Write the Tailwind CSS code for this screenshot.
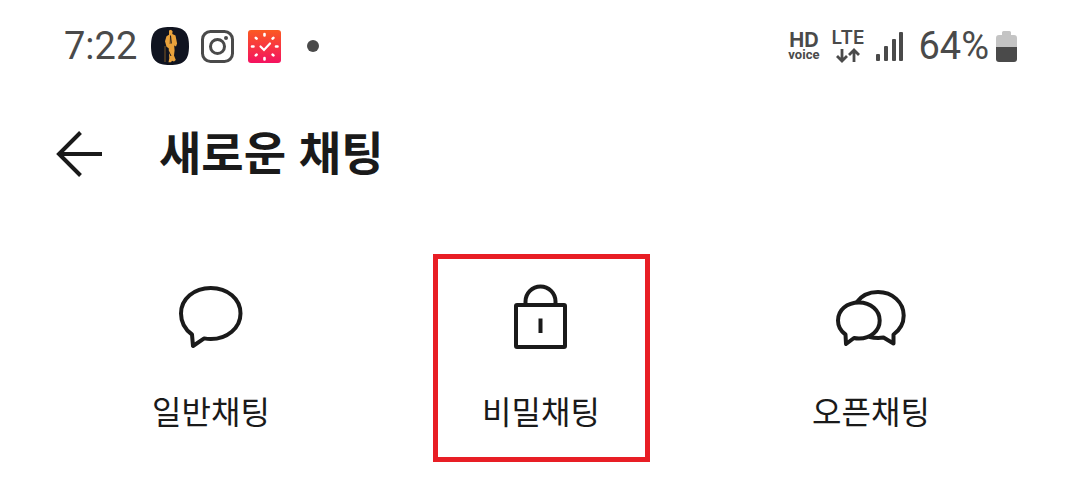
<!DOCTYPE html>
<html lang="ko">
<head>
    <meta charset="UTF-8">
    <meta name="viewport" content="width=device-width, initial-scale=1.0">
    <script src="https://cdn.jsdelivr.net/npm/@tailwindcss/browser@4"></script>
    <title>새로운 채팅</title>
</head>

<body class="bg-white text-[#1a1a1a] font-['Noto_Sans_CJK_KR',sans-serif]">
    <!-- Status bar -->
    <div class="flex items-center justify-between pt-6 pl-16 pr-[63px] text-[#4a4a4a] font-[Roboto,sans-serif]">
        <div class="flex items-center h-11">
            <span class="text-[38px] leading-[44px]">7:22</span>
            <svg class="ml-3.5 size-[38px]" viewBox="0 0 38 38" aria-hidden="true">
                <path d="M19 0C33 0 38 5 38 19S33 38 19 38 0 33 0 19 5 0 19 0Z" fill="#101420" />
                <path d="M18 3.500l2-.8 1.600 1.500-.3 2.800 3.200 1.500 1.600 8-1.100 3-1.800-1 .4 5-.6 5 1.800 4.500-1.800 1.500-2-.8-1 1.500h-2.500l.8-4-.6-10-2.200-1.500-1.500-5.500 1.500-5 2.500-1.500z" fill="#e9a23b" />
                <path d="M14 19v16M19.500 9l-.5 8" stroke="#7a5626" stroke-width="1" fill="none" />
                <path d="M19.500 8.500l.8 8M17.500 24l2.500 5" stroke="#101420" stroke-width="1" fill="none" />
            </svg>
            <svg class="ml-3 size-[33px]" viewBox="0 0 33 33" fill="none" stroke="#4a4a4a" aria-hidden="true">
                <rect x="1.500" y="1.500" width="30" height="30" rx="8" stroke-width="3" />
                <circle cx="16.500" cy="16.500" r="7" stroke-width="3" />
                <circle cx="25" cy="8" r="2" fill="#4a4a4a" stroke="none" />
            </svg>
            <svg class="ml-3.5 size-[33px]" viewBox="0 0 33 33" fill="none" stroke="#fff" stroke-linecap="round" aria-hidden="true">
                <defs>
                    <linearGradient id="clock-bg" x1="0" y1="0" x2="0" y2="1">
                        <stop offset="0" stop-color="#fb5a22" />
                        <stop offset="1" stop-color="#f41260" />
                    </linearGradient>
                </defs>
                <rect width="33" height="33" rx="3" fill="url(#clock-bg)" stroke="none" />
                <path d="M16.500 4v1.500M16.500 28v1.500M4 16.500h1.500M28 16.500h1.500M7.800 7.800l.8.8M24.600 24.600l.8.8M7.800 25.400l.8-.8M24.600 8.600l.8-.8" stroke-width="2.600" />
                <path d="M12.500 16.500l3.500 3.500 6-6.500" stroke-width="2.200" />
            </svg>
            <span class="ml-[26px] size-3 rounded-full bg-[#4a4a4a]"></span>
        </div>
        <div class="flex items-center h-11">
            <div class="flex flex-col items-center font-bold">
                <span class="text-[20px] leading-[18px] font-[Inter,sans-serif]">HD</span>
                <span class="text-[13px] leading-3">voice</span>
            </div>
            <div class="ml-3 flex flex-col items-center gap-0.5">
                <span class="text-[19px] leading-4 font-semibold font-[Inter,sans-serif]">LTE</span>
                <svg class="w-6 h-[15px]" viewBox="0 0 24 15" fill="none" stroke="#4a4a4a" stroke-width="2.800" aria-hidden="true">
                    <path d="M6 1v11.500M1 8l5 5 5-5M18 14V2.500M13 7l5-5 5 5" />
                </svg>
            </div>
            <svg class="ml-3 w-7 h-[30px]" viewBox="0 0 28 30" fill="#4a4a4a" aria-hidden="true">
                <rect x="0" y="23" width="4" height="7" rx="1" />
                <rect x="8" y="15" width="4" height="15" rx="1" />
                <rect x="16" y="8" width="4" height="22" rx="1" />
                <rect x="23" y="1" width="4" height="29" rx="1" />
            </svg>
            <span class="ml-3.5 text-[38px] leading-[44px]">64%</span>
            <svg class="ml-[7px] w-[21px] h-[31px]" viewBox="0 0 21 31" aria-hidden="true">
                <path d="M6 4V1.500Q6 0 7.500 0h6Q15 0 15 1.500V4h3q3 0 3 3v9H0V7q0-3 3-3z" fill="#c4c4c4" />
                <path d="M0 16h21v12q0 3-3 3H3q-3 0-3-3z" fill="#4a4a4a" />
            </svg>
        </div>
    </div>

    <header class="mt-[58px] flex items-center gap-14 pl-14">
        <button type="button" aria-label="뒤로">
            <svg class="w-[47px] h-[46px]" viewBox="0 0 47 46" fill="none" stroke="#1a1a1a" stroke-width="4" aria-hidden="true">
                <path d="M46 23H3M24.500 1.500L3 23l21.500 21.500" />
            </svg>
        </button>
        <h1 class="pb-2 text-[46px] leading-12 font-bold">새로운 채팅</h1>
    </header>

    <main class="mt-[72px] grid grid-cols-3 justify-items-center pl-[46px] pr-11">
        <button type="button" class="flex flex-col items-center gap-[37px] w-[217px] border-[5px] border-transparent pt-[22px] pb-[27px]">
            <svg class="size-[72px]" viewBox="0 0 72 72" fill="none" stroke="#1a1a1a" stroke-width="4" stroke-linejoin="round" aria-hidden="true">
                <path d="M17 53.500C10 48.500 6 41 6 32.500 6 18 19 7 35.800 7S65.500 18 65.500 32.500 52 58 35.800 58q-3.500 0-6.600-.6L18 65z" />
            </svg>
            <span class="text-[32px] leading-10">일반채팅</span>
        </button>
        <button type="button" class="flex flex-col items-center gap-[37px] w-[217px] border-[5px] border-[#e81e25] pt-[22px] pb-[27px]">
            <svg class="size-[72px]" viewBox="0 0 72 72" fill="none" stroke="#1a1a1a" stroke-width="4" stroke-linejoin="round" aria-hidden="true">
                <rect x="11" y="24" width="49" height="42" rx="1" />
                <path d="M20.500 24v-3.500a15 15 0 0 1 30 0V24M35.500 37.500V52" />
            </svg>
            <span class="text-[32px] leading-10">비밀채팅</span>
        </button>
        <button type="button" class="flex flex-col items-center gap-[37px] w-[217px] border-[5px] border-transparent pt-[22px] pb-[27px]">
            <svg class="size-[72px]" viewBox="0 0 72 72" fill="none" stroke="#1a1a1a" stroke-width="4" stroke-linejoin="round" aria-hidden="true">
                <path d="M10.500 53.500C5.500 50 3 45 3 39.500 3 29 12 21.500 24 21.500s20.700 8 20.700 18S36 57.500 24 57.500q-2.800 0-5-.5L11 63z" />
                <path d="M21.500 21.500C26 15 34 11 43 11c14.500 0 25.700 10.500 25.700 23.500 0 8-4 14.500-10.200 19v9L48.500 56.500q-7 1.200-14.500-.8" />
            </svg>
            <span class="text-[32px] leading-10">오픈채팅</span>
        </button>
    </main>
</body>

</html>
